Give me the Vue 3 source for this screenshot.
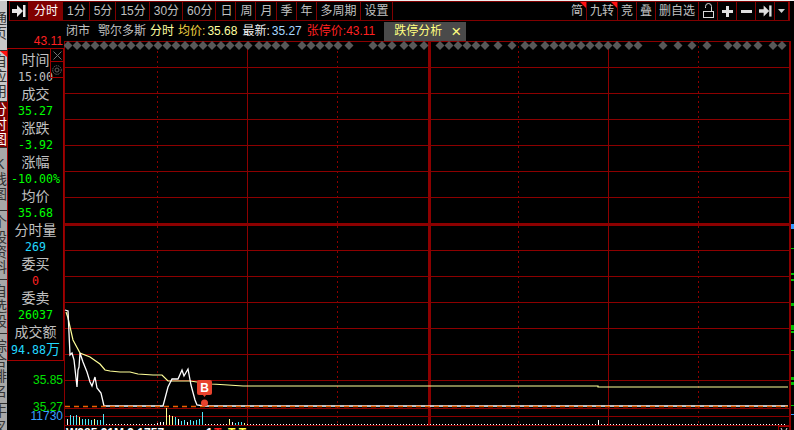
<script setup>
const sideTabs = [
  { text: '通页', h: 50, cls: 'light' },
  { text: '自应用', h: 51, cls: 'light corner' },
  { text: '分时图', h: 46, cls: 'on' },
  { text: 'K线图', h: 63, cls: '' },
  { text: '个股资料', h: 69, cls: '' },
  { text: '自选股', h: 54, cls: '' },
  { text: '综合排名', h: 70, cls: '' },
  { text: '牛叉诊断', h: 60, cls: '' },
];
const periods = ['1分', '5分', '15分', '30分', '60分', '日', '周', '月', '季', '年', '多周期', '设置'];

const rows = [
  ['时间', '15:00', 'gray'],
  ['成交', '35.27', 'green'],
  ['涨跌', '-3.92', 'green'],
  ['涨幅', '-10.00%', 'green'],
  ['均价', '35.68', 'green'],
  ['分时量', '269', 'cyan'],
  ['委买', '0', 'red'],
  ['委卖', '26037', 'green'],
];

// 涨停价那一排灰色菱形
const diamonds = [
  68, 77, 86, 95, 104, 113, 122, 131, 140, 149, 158, 167, 176, 185, 194, 203, 212, 221, 230, 239, 248,
  259, 267, 276, 285, 302, 311, 320, 329, 338, 349, 373, 382, 392, 404, 413, 424, 440, 449, 458, 467,
  476, 485, 498, 512, 525, 533, 545, 554, 563, 572, 581, 590, 599, 608, 617, 629, 638, 663, 678, 692,
  707, 728, 737, 747, 758, 773, 782,
];
const hLines = [67, 93, 119, 145, 171, 197, 250, 276, 302, 328, 354, 380, 408, 416, 425];
const solidV = [247, 608];
const dotV = [157, 337, 518, 698];

const priceLine =
  '65,310 68,311 70,355 72,353 74,360 77,387 78,370 79,367 80,353 83,362 87,372 90,382 92,386 95,377 97,388 101,393 104,406 163,406 168,387 172,379 178,379 182,370 184,376 188,369 191,385 195,400 197,405 204,406 788,406';
const avgLine =
  '66,312 68,318 73,340 80,353 90,357 100,364 105,370 110,371 120,372 130,372 138,374 153,375 162,375 168,381 190,381 197,382 212,384 228,385 243,386 598,386 598,387 788,387';

// 量柱：前面几十根手动取的高度，后面都是矮的白点
const tall = {
  0: [6, 'w'], 1: [10, 'c'], 2: [9, 'c'], 3: [10, 'c'], 4: [8, 'y'], 5: [6, 'c'], 6: [6, 'c'], 7: [6, 'c'],
  8: [5, 'c'], 9: [6, 'y'], 10: [5, 'c'], 11: [5, 'c'], 12: [11, 'c'], 30: [2, 'w'], 31: [3, 'w'],
  32: [3, 'w'], 33: [17, 'y'], 34: [10, 'y'], 35: [9, 'y'], 36: [8, 'c'], 37: [6, 'w'], 38: [4, 'c'],
  39: [5, 'c'], 40: [3, 'w'], 41: [5, 'c'], 42: [4, 'c'], 43: [5, 'c'], 44: [6, 'c'], 45: [13, 'c'],
  54: [6, 'y'], 55: [3, 'w'], 56: [2, 'c'], 57: [3, 'c'], 58: [3, 'c'], 59: [2, 'y'], 177: [5, 'w'],
};
const volColor = { w: '#ffffff', c: '#50e8f8', y: '#ffff90' };
const bars = [];
for (let i = 0; i < 240; i++) {
  const t = tall[i] || [1, 'w'];
  bars.push({ x: 67 + i * 3, h: t[0], c: volColor[t[1]] });
}

const edgeTicks = [
  [224, 5, '#3399ff'], [248, 1, '#00c000'], [273, 2, '#00c000'], [279, 2, '#00c000'], [303, 3, '#00c000'],
  [325, 5, '#00c000'], [331, 2, '#00c000'], [350, 1, '#00c000'], [377, 3, '#00c000'], [382, 3, '#00c000'],
  [405, 1, '#00c000'], [414, 1, '#3399ff'],
];
</script>

<template>
  <div class="page">
    <div class="side">
      <div
        v-for="t in sideTabs"
        :key="t.text"
        class="side-tab"
        :class="t.cls"
        :style="{ height: t.h + 'px' }"
      >
        <span class="side-text">{{ t.text }}</span>
      </div>
    </div>

    <div class="main">
      <div class="toolbar">
        <div class="cell icon-cell">
          <svg width="14" height="12" viewBox="0 0 14 12">
            <path d="M0 4h5V0l6 6-6 6V8H0z" fill="#e8e8e8" />
            <rect x="11" y="0" width="2.5" height="12" fill="#e8e8e8" />
          </svg>
        </div>
        <div class="cell active">分时</div>
        <div v-for="p in periods" :key="p" class="cell">{{ p }}</div>

        <div class="spacer"></div>

        <div class="cell tight mark">简</div>
        <div class="cell tight mark">九转</div>
        <div class="cell tight">竞</div>
        <div class="cell tight">叠</div>
        <div class="cell tight">删自选</div>
        <div class="cell icon-cell">
          <svg width="13" height="16" viewBox="0 0 13 16">
            <path d="M3.500 5V3.500a3 3 0 0 1 6 0V8" fill="none" stroke="#d8d8d8" />
            <rect x="1.500" y="8.500" width="10" height="6" fill="none" stroke="#d8d8d8" />
          </svg>
        </div>
        <div class="cell icon-cell">
          <svg width="11" height="11" viewBox="0 0 11 11">
            <path d="M4 0h3v4h4v3H7v4H4V7H0V4h4z" fill="#e0e0e0" />
          </svg>
        </div>
        <div class="cell icon-cell">
          <svg width="11" height="3" viewBox="0 0 11 3"><rect width="11" height="3" fill="#e0e0e0" /></svg>
        </div>
        <div class="cell icon-cell">
          <svg width="13" height="12" viewBox="0 0 14 12">
            <path d="M0 4h5V0l6 6-6 6V8H0z" fill="#e0e0e0" />
            <rect x="11" y="0" width="2.5" height="12" fill="#e0e0e0" />
          </svg>
        </div>
        <div class="cell drop">
          <svg width="7" height="4" viewBox="0 0 7 4"><path d="M0 0h7L3.500 4z" fill="#d0d0d0" /></svg>
        </div>
      </div>

      <div class="body">
        <div class="left-col">
          <div class="axis top-price">43.11</div>
          <div class="panel">
            <div class="panel-tools">
              <div class="tool">
                <svg width="9" height="9" viewBox="0 0 9 9">
                  <path d="M0.500 0.500l8 8M8.500 0.500l-8 8" stroke="#707070" fill="none" />
                </svg>
              </div>
              <div class="tool tool-gear">
                <svg width="10" height="10" viewBox="0 0 10 10">
                  <circle cx="5" cy="5" r="4.300" fill="none" stroke="#606060" stroke-dasharray="1.500 0.800" />
                  <circle cx="5" cy="5" r="2" fill="none" stroke="#606060" />
                </svg>
              </div>
            </div>
            <template v-for="r in rows" :key="r[0]">
              <div class="row label">{{ r[0] }}</div>
              <div class="row num" :class="r[2]">{{ r[1] }}</div>
            </template>
            <div class="row label">成交额</div>
            <div class="row num cyan">94.88<span class="wan">万</span></div>
          </div>
          <div class="axis p1">35.85</div>
          <div class="axis p2">35.27</div>
          <div class="axis p3">11730</div>
        </div>

        <div class="chart-col">
          <div class="info">
            <span class="gray">闭市</span>
            <span class="gray m8">鄂尔多斯</span>
            <span class="pale m4">分时</span>
            <span class="amber m4">均价:</span>
            <span class="pale m2">35.68</span>
            <span class="white m5">最新:</span>
            <span class="blue m2">35.27</span>
            <span class="red m5">张停价:43.11</span>
            <span class="zt-tab">跌停分析<i class="zt-close">×</i></span>
          </div>

          <svg class="chart" width="730" height="389" viewBox="64 41 730 389">
            <g shape-rendering="crispEdges" fill="#8c0000">
              <rect x="64" y="41" width="726" height="1" />
              <rect v-for="y in hLines" :key="y" x="64" :y="y" width="726" height="1" />
              <rect x="64" y="223" width="726" height="3" />
              <rect x="64" y="41" width="1" height="389" />
              <rect x="789" y="41" width="2" height="389" />
              <rect v-for="x in solidV" :key="x" :x="x" y="41" width="1" height="384" />
              <rect x="428" y="41" width="3" height="384" />
              <line
                v-for="x in dotV"
                :key="x"
                :x1="x + 0.5"
                y1="41"
                :x2="x + 0.5"
                y2="425"
                stroke="#8c0000"
                stroke-dasharray="2 3"
              />
            </g>

            <path
              v-for="x in diamonds"
              :key="x"
              :d="`M${x} 41l4.500 4.500-4.500 4.500-4.500-4.500z`"
              fill="#585858"
            />

            <polyline :points="avgLine" fill="none" stroke="#ffff99" stroke-width="1.200" />
            <polyline :points="priceLine" fill="none" stroke="#ffffff" stroke-width="1.300" />
            <line x1="65" y1="406.500" x2="788" y2="406.500" stroke="#f06000" stroke-width="1.500" stroke-dasharray="5 4" />

            <g shape-rendering="crispEdges">
              <rect v-for="b in bars" :key="b.x" :x="b.x" :y="425 - b.h" width="1" :height="b.h" :fill="b.c" />
              <rect v-for="t in edgeTicks" :key="t[0]" x="791" :y="t[0]" width="3" :height="t[1]" :fill="t[2]" />
            </g>

            <rect x="197" y="380" width="15" height="15" rx="2" fill="#e8432e" />
            <path d="M203 395h3l-1.500 2z" fill="#e8432e" />
            <circle cx="204.500" cy="403" r="3.500" fill="#e8432e" />
            <text x="204.500" y="392" class="b-text" text-anchor="middle">B</text>

            <!-- 下面一排文字只露出顶部 -->
            <text x="66" y="437" class="cut" fill="#ffffff">W385.91M 9.1757</text>
            <text x="206" y="437" class="cut" fill="#ffffff">1</text>
            <text x="214" y="437" class="cut" fill="#ff2020">T</text>
            <text x="228" y="437" class="cut" fill="#ffff40">T T</text>

            <path d="M778.500 430v-4h12" fill="none" stroke="#a00000" shape-rendering="crispEdges" />
            <path d="M781 428l1 2M787 428l-1 2" stroke="#e0e0e0" fill="none" />
          </svg>
        </div>
      </div>
    </div>
  </div>
</template>

<style scoped>
.page {
  width: 794px;
  height: 430px;
  overflow: hidden;
  background: #000;
  display: flex;
  box-sizing: border-box;
  border-top: 1px solid #f0f0f0;
  font-family: "Liberation Sans", "Noto Sans CJK SC", sans-serif;
  font-size: 12px;
  color: #c0c0c0;
}

.side {
  width: 7px;
  flex: none;
  display: flex;
  flex-direction: column;
}
.side-tab {
  position: relative;
  box-sizing: border-box;
  overflow: hidden;
  flex: none;
  background: #a8a8a8;
  border-bottom: 1px solid #303030;
  display: flex;
  flex-direction: column;
  align-items: flex-start;
  justify-content: center;
  color: #333;
}
.side-tab.light {
  background: #c8c8c8;
}
.side-tab.on {
  background: #800000;
  color: #fff;
}
.side-tab.corner::after {
  content: "";
  position: absolute;
  top: 0;
  right: 0;
  border-top: 6px solid #ff1010;
  border-left: 7px solid transparent;
}
.side-text {
  width: 14px;
  margin-left: -7px;
  flex: none;
  font-size: 14px;
  line-height: 15px;
  text-align: center;
  word-break: break-all;
}

.main {
  flex: 1;
  min-width: 0;
  display: flex;
  flex-direction: column;
}

.toolbar {
  height: 20px;
  flex: none;
  box-sizing: border-box;
  margin: 0 4px 0 2px;
  display: flex;
  border-top: 1px solid #800000;
  border-bottom: 1px solid #800000;
  border-left: 1px solid #800000;
}
.cell {
  position: relative;
  box-sizing: border-box;
  display: flex;
  align-items: center;
  justify-content: center;
  padding: 0 3px 0 4px;
  border-right: 1px solid #800000;
  white-space: nowrap;
  line-height: 18px;
}
.cell.active {
  width: 34px;
  background: #800000;
  color: #fff;
}
.icon-cell {
  width: 19px;
  padding: 0;
}
.cell.tight {
  padding: 0 3px;
}
.cell.mark::after {
  content: "";
  position: absolute;
  top: 0;
  right: 0;
  border-top: 6px solid #ff1010;
  border-left: 6px solid transparent;
}
.cell.drop {
  width: 15px;
  padding: 0;
  border-right: 2px solid #900000;
}
.spacer {
  flex: 1;
}

.body {
  flex: 1;
  min-height: 0;
  display: flex;
}

.left-col {
  width: 57px;
  flex: none;
  display: flex;
  flex-direction: column;
}
.axis {
  height: 14px;
  line-height: 14px;
  padding-right: 1px;
  text-align: right;
  flex: none;
}
.top-price {
  margin-top: 13px;
  color: #ff2020;
}
.p1 {
  margin-top: 12px;
  color: #00e000;
}
.p2 {
  margin-top: 13px;
  color: #00e000;
}
.p3 {
  margin-top: -5px;
  color: #3aa0ff;
}

.panel {
  position: relative;
  box-sizing: border-box;
  height: 313px;
  flex: none;
  padding-top: 3px;
  border: 1px solid #a00000;
}
.panel-tools {
  position: absolute;
  top: 0;
  right: 0;
  width: 12px;
  border-left: 1px solid #a00000;
  border-bottom: 1px solid #a00000;
}
.tool {
  height: 12px;
  display: flex;
  align-items: center;
  justify-content: center;
}
.tool-gear {
  height: 15px;
  border-top: 1px solid #a00000;
}
.row {
  height: 17px;
  line-height: 17px;
  text-align: center;
  white-space: nowrap;
}
.label {
  font-size: 14px;
  color: #c0c0c0;
}
.num {
  font-family: "DejaVu Sans Mono", monospace;
  font-size: 11.600px;
}
.wan {
  font-family: "Liberation Sans", "Noto Sans CJK SC", sans-serif;
  font-size: 14px;
}

.gray { color: #c0c0c0; }
.green { color: #00ff00; }
.cyan { color: #20d8ff; }
.red { color: #ff2020; }
.pale { color: #ffffa0; }
.amber { color: #f0d040; }
.white { color: #f0f0f0; }
.blue { color: #a8d8ff; }

.chart-col {
  flex: 1;
  min-width: 0;
  display: flex;
  flex-direction: column;
}
.info {
  height: 20px;
  flex: none;
  box-sizing: border-box;
  padding-left: 2px;
  margin-right: 3px;
  display: flex;
  align-items: center;
  white-space: nowrap;
  line-height: 20px;
}
.m8 { margin-left: 8px; }
.m5 { margin-left: 5px; }
.m4 { margin-left: 4px; }
.m2 { margin-left: 2px; }
.zt-tab {
  margin-left: 9px;
  width: 82px;
  height: 19px;
  box-sizing: border-box;
  padding-left: 10px;
  background: #4a4a4a;
  color: #ffff80;
  line-height: 19px;
  display: flex;
}
.zt-close {
  margin-left: 9px;
  font-style: normal;
  font-size: 17px;
  font-weight: 400;
}
.chart {
  display: block;
  flex: none;
}
.b-text {
  font-family: "Liberation Sans", sans-serif;
  font-size: 12px;
  font-weight: 700;
  fill: #fff;
}
.cut {
  font-family: "Liberation Sans", sans-serif;
  font-size: 12px;
  font-weight: 700;
}
</style>

<style>
html,
body {
  background: #000;
}
</style>
